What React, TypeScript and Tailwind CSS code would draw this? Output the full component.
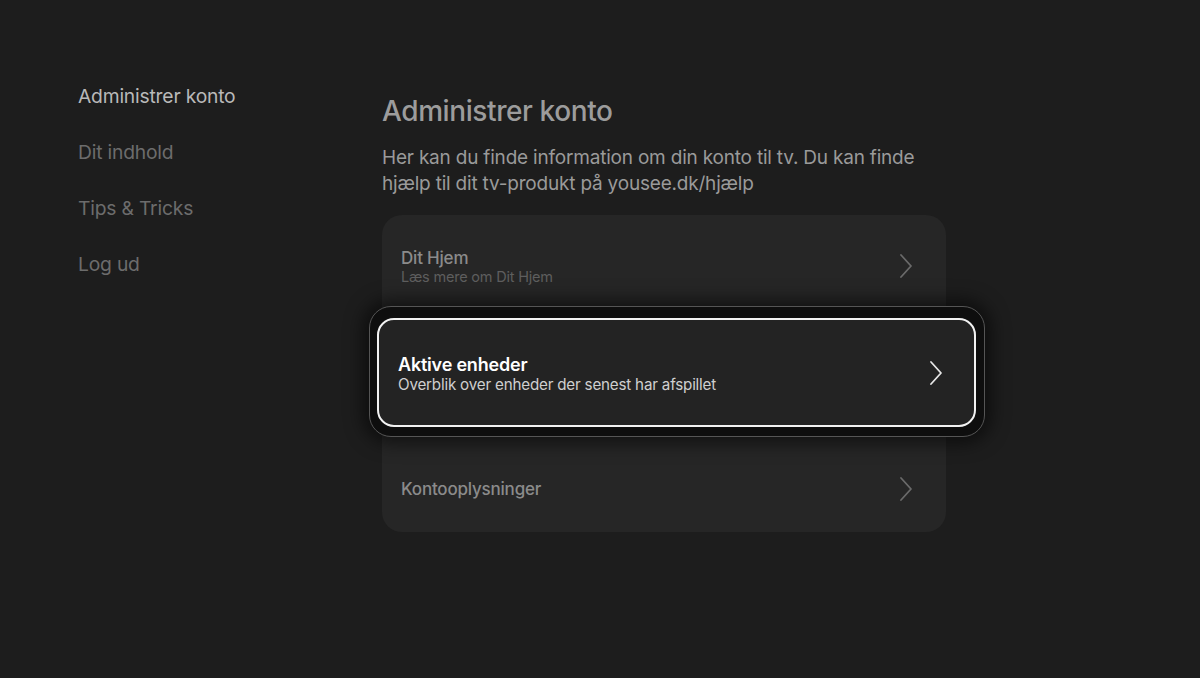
const menu = [
  { label: 'Administrer konto', active: true },
  { label: 'Dit indhold', active: false },
  { label: 'Tips & Tricks', active: false },
  { label: 'Log ud', active: false },
]

function Chevron({ className }: { className?: string }) {
  return (
    <svg width="14" height="26" viewBox="0 0 14 26" fill="none" className={className}>
      <polyline
        points="2,2 12,13 2,24"
        stroke="currentColor"
        strokeWidth="1.8"
        strokeLinecap="round"
        strokeLinejoin="round"
      />
    </svg>
  )
}

export default function App() {
  return (
    <div
      className="w-[1200px] h-[678px] bg-[#1d1d1d] flex overflow-hidden"
      style={{ fontFamily: 'Inter, "Noto Sans", sans-serif' }}
    >
      {/* side menu */}
      <nav className="w-[382px] shrink-0 pl-[78px] pt-[84px] flex flex-col gap-[32px]">
        {menu.map((item) => (
          <div
            key={item.label}
            className={`text-[19.3px] leading-[24px] tracking-[-0.2px] ${
              item.active ? 'text-[#b9b9b9]' : 'text-[#6c6c6c]'
            }`}
          >
            {item.label}
          </div>
        ))}
      </nav>

      <main className="w-[564px] shrink-0 pt-[94px] flex flex-col">
        <h1 className="text-[28px] leading-[34px] font-medium text-[#9c9c9c] tracking-[-0.4px]">
          Administrer konto
        </h1>
        <p className="mt-[17px] text-[19px] leading-[26px] text-[#9a9a9a] tracking-[-0.2px] w-[560px]">
          Her kan du finde information om din konto til tv. Du kan finde hjælp til dit tv-produkt på yousee.dk/hjælp
        </p>

        <div className="mt-[18px] rounded-[20px] bg-[#262626] flex flex-col">
          <div className="h-[90px] pt-[12px] pl-[19px] pr-[33px] flex items-center justify-between">
            <div className="flex flex-col pt-[2px]">
              <span className="text-[17px] leading-[20px] font-medium text-[#8b8b8b] tracking-[-0.2px]">Dit Hjem</span>
              <span className="text-[14.5px] leading-[18px] text-[#5e5e5e] tracking-[-0.2px]">Læs mere om Dit Hjem</span>
            </div>
            <Chevron className="text-[#6a6a6a]" />
          </div>

          <div className="h-[140px] relative">
            {/* focused row, drawn raised above the list */}
            <div className="absolute left-[-13px] right-[-39px] top-[1px] bottom-[8px] rounded-[22px] bg-[#0e0e0e] border border-[#555555] shadow-[0_0_18px_6px_rgba(0,0,0,0.55)] pt-[11px] pb-[9px] pl-[7px] pr-[8px]">
              <div className="h-full rounded-[17px] border-2 border-[#f2f2f2] bg-[#232323] pl-[19px] pr-[31px] flex items-center justify-between">
                <div className="flex flex-col pt-[2px]">
                  <span className="text-[18px] leading-[21px] font-semibold text-white tracking-[-0.2px]">Aktive enheder</span>
                  <span className="text-[15.2px] leading-[19px] text-[#cfcfcf] tracking-[-0.2px]">
                    Overblik over enheder der senest har afspillet
                  </span>
                </div>
                <Chevron className="text-[#e6e6e6]" />
              </div>
            </div>
          </div>

          <div className="h-[87px] pl-[19px] pr-[33px] flex items-center justify-between">
            <span className="text-[17px] leading-[20px] font-medium text-[#8b8b8b] tracking-[-0.2px]">Kontooplysninger</span>
            <Chevron className="text-[#6a6a6a]" />
          </div>
        </div>
      </main>
    </div>
  )
}
